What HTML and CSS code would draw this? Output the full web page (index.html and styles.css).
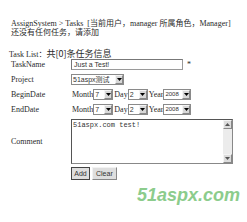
FILE: index.html
```html
<!DOCTYPE html>
<html>
<head>
<meta charset="utf-8">
<link rel="stylesheet" href="styles.css">
</head>
<body>
<div class="page">
  <div class="crumb">AssignSystem &gt; Tasks &nbsp;[当前用户，manager 所属角色，Manager]</div>
  <div class="crumb">还没有任何任务，请添加</div>
  <div class="list-title">Task List：<span class="count">共[0]条任务信息</span></div>
  <div class="form">
    <div class="label">TaskName</div>
    <div class="ctrl"><span class="input">Just a Test!</span><span class="star">*</span></div>

    <div class="label">Project</div>
    <div class="ctrl"><span class="select w53"><span class="val">51aspx测试</span><span class="arrow"><svg width="5" height="3" viewBox="0 0 5 3"><path d="M0 0H5L2.5 3Z" fill="#000"/></svg></span></span></div>

    <div class="label">BeginDate</div>
    <div class="ctrl">
      <span class="word">Month</span><span class="select w20"><span class="val">7</span><span class="arrow"><svg width="5" height="3" viewBox="0 0 5 3"><path d="M0 0H5L2.5 3Z" fill="#000"/></svg></span></span>
      <span class="word">Day</span><span class="select w20"><span class="val">2</span><span class="arrow"><svg width="5" height="3" viewBox="0 0 5 3"><path d="M0 0H5L2.5 3Z" fill="#000"/></svg></span></span>
      <span class="word">Year</span><span class="select w28"><span class="val small">2008</span><span class="arrow"><svg width="5" height="3" viewBox="0 0 5 3"><path d="M0 0H5L2.5 3Z" fill="#000"/></svg></span></span>
    </div>

    <div class="label">EndDate</div>
    <div class="ctrl">
      <span class="word">Month</span><span class="select w20"><span class="val">7</span><span class="arrow"><svg width="5" height="3" viewBox="0 0 5 3"><path d="M0 0H5L2.5 3Z" fill="#000"/></svg></span></span>
      <span class="word">Day</span><span class="select w20"><span class="val">2</span><span class="arrow"><svg width="5" height="3" viewBox="0 0 5 3"><path d="M0 0H5L2.5 3Z" fill="#000"/></svg></span></span>
      <span class="word">Year</span><span class="select w28"><span class="val small">2008</span><span class="arrow"><svg width="5" height="3" viewBox="0 0 5 3"><path d="M0 0H5L2.5 3Z" fill="#000"/></svg></span></span>
    </div>

    <div class="label">Comment</div>
    <div class="ctrl tall">
      <div class="textarea">
        <div class="ta-text">51aspx.com test!</div>
        <div class="scroll">
          <span class="sbtn"><svg width="5" height="3" viewBox="0 0 5 3"><path d="M0 3H5L2.5 0Z" fill="#555"/></svg></span>
          <span class="track"></span>
          <span class="sbtn"><svg width="5" height="3" viewBox="0 0 5 3"><path d="M0 0H5L2.5 3Z" fill="#555"/></svg></span>
        </div>
      </div>
    </div>

    <div class="label"></div>
    <div class="ctrl buttons"><span class="btn default">Add</span><span class="btn">Clear</span></div>
  </div>
  <div class="watermark">51aspx.com</div>
</div>
</body>
</html>
```

FILE: styles.css
```css
html, body {
  margin: 0;
  padding: 0;
  background: #fff;
}
.page {
  position: relative;
  width: 247px;
  height: 222px;
  padding: 19px 0 0 11px;
  box-sizing: border-box;
  font-family: "Liberation Serif", "Noto Sans CJK SC", serif;
  font-size: 8px;
  color: #2a2a2a;
}
.crumb {
  line-height: 9px;
  height: 9px;
  white-space: nowrap;
}
.list-title {
  margin: 11px 0 0 -2px;
  height: 11px;
  line-height: 11px;
  white-space: nowrap;
}
.count {
  font-size: 9px;
  font-family: "Noto Sans CJK SC", sans-serif;
}
.form {
  display: grid;
  grid-template-columns: 60px auto;
  row-gap: 4px;
  align-items: center;
}
.label {
  line-height: 9px;
}
.ctrl {
  display: flex;
  align-items: center;
  height: 11px;
}
.ctrl.tall {
  height: 45px;
}
.input {
  box-sizing: border-box;
  width: 112px;
  height: 11px;
  border: 1px solid #9a9a9a;
  border-top-color: #777;
  border-left-color: #777;
  font-family: "Liberation Sans", sans-serif;
  font-size: 7px;
  line-height: 9px;
  padding-left: 2px;
  color: #333;
}
.star {
  margin-left: 4px;
  font-size: 8px;
}
.select {
  box-sizing: border-box;
  display: inline-flex;
  height: 11px;
  border: 1px solid #8a8a8a;
  overflow: hidden;
  background: #fff;
}
.w53 { width: 53px; }
.w20 { width: 20px; }
.w28 { width: 28px; }
.val {
  flex: 1;
  overflow: hidden;
  white-space: nowrap;
  font-family: "Liberation Sans", "Noto Sans CJK SC", sans-serif;
  font-size: 7px;
  line-height: 9px;
  padding-left: 1px;
  color: #333;
}
.val.small {
  font-size: 6px;
}
.arrow {
  width: 8px;
  height: 9px;
  box-sizing: border-box;
  background: #d8d8d8;
  border: 1px solid #f4f4f4;
  border-right-color: #888;
  border-bottom-color: #888;
  display: flex;
  align-items: center;
  justify-content: center;
}
.word {
  margin-left: 1px;
}
.textarea {
  box-sizing: border-box;
  width: 162px;
  height: 45px;
  border: 1px solid #888;
  border-top-color: #555;
  border-left-color: #555;
  display: flex;
  background: #fff;
}
.ta-text {
  flex: 1;
  font-family: "Liberation Mono", monospace;
  font-size: 7px;
  line-height: 9px;
  padding: 1px 0 0 1px;
  color: #333;
}
.scroll {
  width: 9px;
  display: flex;
  flex-direction: column;
  background: #ececec;
}
.sbtn {
  height: 9px;
  box-sizing: border-box;
  background: #dcdcdc;
  border: 1px solid #f4f4f4;
  border-right-color: #888;
  border-bottom-color: #888;
  display: flex;
  align-items: center;
  justify-content: center;
}
.track {
  flex: 1;
}
.buttons {
  height: 13px;
  gap: 2px;
  margin-top: -1px;
}
.btn {
  box-sizing: border-box;
  height: 13px;
  padding: 0 3px;
  background: #dedede;
  border: 1px solid #f2f2f2;
  border-right-color: #888;
  border-bottom-color: #888;
  font-family: "Liberation Sans", sans-serif;
  font-size: 7px;
  line-height: 11px;
  color: #333;
}
.btn.default {
  outline: 1px solid #444;
  outline-offset: -1px;
  width: 19px;
  text-align: center;
  padding: 0;
}
.watermark {
  position: absolute;
  left: 137px;
  top: 185px;
  font-family: "Liberation Sans", sans-serif;
  font-weight: bold;
  font-style: italic;
  font-size: 18px;
  color: #8ccc8c;
}
```
